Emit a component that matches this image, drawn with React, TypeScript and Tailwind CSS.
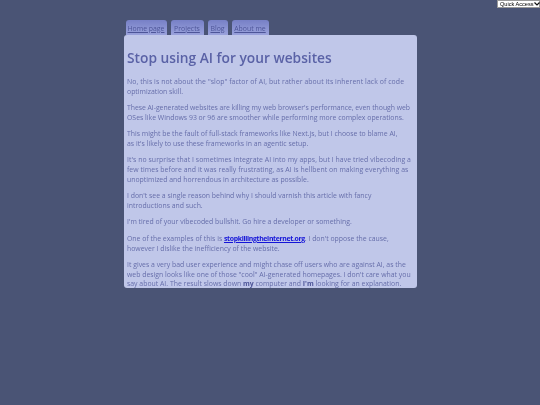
export default function App() {
  const tabs = [
    { t: "Home page", w: "w-[41px]" },
    { t: "Projects", w: "w-[33px]" },
    { t: "Blog", w: "w-[20px]" },
    { t: "About me", w: "w-[37px]" },
  ];
  const p = "mb-[6.85px] text-[6.9px] leading-[9.65px] text-[#666eaa] whitespace-nowrap";
  return (
    <div className="relative min-h-[405px] bg-[#4a5475] font-['Open_Sans',sans-serif] blur-[0.3px]">
      <div className="absolute right-0 top-0 h-[8px] w-[43px] bg-white border border-[#999] flex items-center justify-between pl-[2px] pr-[1px] text-[5.6px] leading-[7px] text-black font-['Liberation_Sans',sans-serif] whitespace-nowrap">
        <span>Quick Access</span>
        <svg width="6" height="4" viewBox="0 0 6 4" fill="none" stroke="#111" strokeWidth="1.2" className="shrink-0"><path d="M0.5 0.5 L3 3 L5.5 0.5" /></svg>
      </div>
      <div className="ml-[124px] w-[293px] pt-5">
        <nav className="flex gap-[4px] pl-[1.5px]">
          {tabs.map(({ t, w }) => (
            <a key={t} className={`block h-[15px] ${w} rounded-t-[3px] bg-gradient-to-b from-[#7780c6] to-[#9aa2dc] text-center pt-[3.5px] text-[6.9px] leading-[9px] text-[#4d5598] underline whitespace-nowrap`}>{t}</a>
          ))}
        </nav>
        <main className="h-[253px] rounded-[3px] bg-[#c0c7e9] pl-[3px] pt-[13px]">
          <h1 className="mb-[10px] text-[13.75px] leading-[19px] font-semibold text-[#5a62a6]">Stop using AI for your websites</h1>
          <p className={p}><span className="tracking-[0.08px]">No, this is not about the "slop" factor of AI, but rather about its inherent lack of code</span><br />optimization skill.</p>
          <p className={p}><span className="tracking-[-0.05px]">These AI-generated websites are killing my web browser's performance, even though web</span><br />OSes like Windows 93 or 96 are smoother while performing more complex operations.</p>
          <p className={p}>This might be the fault of full-stack frameworks like Next.js, but I choose to blame AI,<br />as it's likely to use these frameworks in an agentic setup.</p>
          <p className={p}><span className="tracking-[0.05px]">It's no surprise that I sometimes integrate AI into my apps, but I have tried vibecoding a</span><br /><span className="tracking-[0.05px]">few times before and it was really frustrating, as AI is hellbent on making everything as</span><br />unoptimized and horrendous in architecture as possible.</p>
          <p className={p}>I don't see a single reason behind why I should varnish this article with fancy<br />introductions and such.</p>
          <p className={p}>I'm tired of your vibecoded bullshit. Go hire a developer or something.</p>
          <p className={p}>One of the examples of this is <a className="font-bold text-[#1414d8] underline tracking-[-0.33px]">stopkillingtheinternet.org</a>. I don't oppose the cause,<br />however I dislike the inefficiency of the website.</p>
          <p className={p}>It gives a very bad user experience and might chase off users who are against AI, as the<br />web design looks like one of those "cool" AI-generated homepages. I don't care what you<br />say about AI. The result slows down <b className="text-[#4d5598]">my</b> computer and <b className="text-[#4d5598]">I'm</b> looking for an explanation.</p>
        </main>
      </div>
    </div>
  );
}
